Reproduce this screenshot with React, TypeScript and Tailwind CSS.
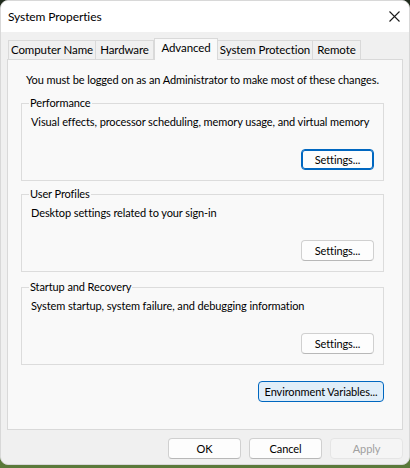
import React from "react";

function Tab({ label, w, selected }: { label: string; w: string; selected?: boolean }) {
  if (selected) {
    return (
      <div
        className={`${w} h-[22px] -mb-[1px] relative z-10 flex items-start justify-center pt-[1px] bg-[#f9f9f9] border border-b-0 border-[#d9d9d9] leading-[16px] whitespace-nowrap`}
      >
        {label}
      </div>
    );
  }
  return (
    <div
      className={`${w} h-[19px] flex items-center justify-center bg-[#f0f0f0] border border-b-0 border-l-0 first:border-l border-[#d9d9d9] leading-[16px] whitespace-nowrap`}
    >
      {label}
    </div>
  );
}

function Btn({
  label,
  variant = "normal",
  w = "w-[73px]",
}: {
  label: string;
  variant?: "normal" | "default" | "env" | "disabled";
  w?: string;
}) {
  const styles: Record<string, string> = {
    normal: "bg-[#fdfdfd] border border-[#d0d0d0] border-b-[#b8b8b8] text-black",
    default: "bg-[#fdfdfd] border border-[#0067c0] text-black shadow-[inset_0_0_0_1px_#0067c0]",
    env: "bg-[#e0eef9] border border-[#0067c0] text-black",
    disabled: "bg-[#f5f5f5] border border-[#e5e5e5] text-[#a0a0a0]",
  };
  return (
    <div
      className={`${w} h-[21px] rounded-[4px] flex items-center justify-center leading-[16px] whitespace-nowrap ${styles[variant]}`}
    >
      {label}
    </div>
  );
}

function Group({
  title,
  desc,
  mt,
  focused,
}: {
  title: string;
  desc: string;
  mt: string;
  focused?: boolean;
}) {
  return (
    <fieldset
      className={`${mt} ml-[13px] w-[363px] border border-[#dcdcdc] pl-[9px] pr-[9px] pb-[10px]`}
    >
      <legend className="-ml-[2px] px-[1px] leading-[16px] whitespace-nowrap">{title}</legend>
      <div className="mt-[3px] leading-[16px] whitespace-nowrap">{desc}</div>
      <div className="mt-[19px] flex justify-end">
        <Btn label="Settings..." variant={focused ? "default" : "normal"} />
      </div>
    </fieldset>
  );
}

export default function App() {
  return (
    <div className="w-[410px] h-[468px] bg-[linear-gradient(180deg,#1f2a1c_0%,#2d3a24_50%,#5b7a3a_100%)] overflow-hidden text-[11px] tracking-[-0.1px] text-black font-[Lato,sans-serif]">
      <div className="w-[410px] h-[465px] rounded-[8px] overflow-hidden bg-[#f0f0f0] flex flex-col border border-[#d8d8d8]">
        {/* Title bar */}
        <div className="h-[31px] bg-white flex items-center justify-between pl-[7px] pr-[8px] shrink-0">
          <span className="text-[12px] leading-[16px] whitespace-nowrap">System Properties</span>
          <svg width="11" height="11" viewBox="0 0 11 11" className="mr-[1px]">
            <path d="M0.5 0.5 L10.5 10.5 M10.5 0.5 L0.5 10.5" stroke="#1a1a1a" strokeWidth="1.1" fill="none" />
          </svg>
        </div>

        {/* Tabs */}
        <div className="mt-[6px] pl-[7px] flex items-end h-[21px] text-[11.5px]">
          <Tab label="Computer Name" w="w-[88px]" />
          <Tab label="Hardware" w="w-[58px]" />
          <Tab label="Advanced" w="w-[64px]" selected />
          <Tab label="System Protection" w="w-[95px]" />
          <Tab label="Remote" w="w-[48px]" />
        </div>

        {/* Panel */}
        <div className="ml-[6px] w-[396px] h-[371px] bg-[#f9f9f9] border border-[#d9d9d9] pt-[12px] flex flex-col">
          <div className="pl-[18px] leading-[16px] whitespace-nowrap">
            You must be logged on as an Administrator to make most of these changes.
          </div>
          <Group
            mt="mt-[7px]"
            focused
            title="Performance"
            desc="Visual effects, processor scheduling, memory usage, and virtual memory"
          />
          <Group mt="mt-[5px]" title="User Profiles" desc="Desktop settings related to your sign-in" />
          <Group
            mt="mt-[7px]"
            title="Startup and Recovery"
            desc="System startup, system failure, and debugging information"
          />
          <div className="mt-[16px] ml-[250px]">
            <Btn label="Environment Variables..." variant="env" w="w-[126px]" />
          </div>
        </div>

        {/* Bottom buttons */}
        <div className="mt-[8px] pl-[167px] flex gap-[8px]">
          <Btn label="OK" />
          <Btn label="Cancel" />
          <Btn label="Apply" variant="disabled" />
        </div>
      </div>
    </div>
  );
}
